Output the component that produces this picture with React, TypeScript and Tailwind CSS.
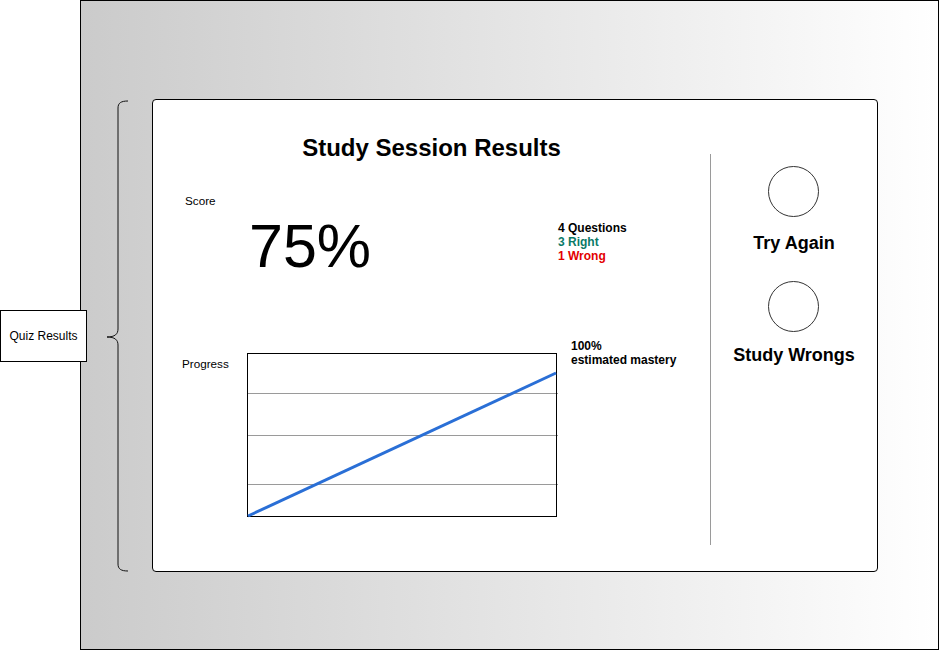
import React from "react";

const Brace = (): JSX.Element => (
  <svg width="24" height="474" viewBox="0 0 24 474" className="mt-[1px] shrink-0">
    <path
      d="M22,1 C15,1 12,3 12,8 V229 C12,234 9,237 1,237 C9,237 12,240 12,245 V464 C12,469 15,471 22,471"
      fill="none"
      stroke="#111"
      strokeWidth="1"
    />
  </svg>
);

const ProgressChart = (): JSX.Element => (
  <svg width="311" height="165" viewBox="0 0 311 165" className="mt-[14px] shrink-0">
    <line x1="0" y1="40.5" x2="311" y2="40.5" stroke="#9a9a9a" />
    <line x1="0" y1="82.5" x2="311" y2="82.5" stroke="#9a9a9a" />
    <line x1="0" y1="131.5" x2="311" y2="131.5" stroke="#9a9a9a" />
    <rect x="0.5" y="0.5" width="309" height="163" fill="none" stroke="#000" />
    <line x1="1" y1="163" x2="309" y2="20" stroke="#2a6fd6" strokeWidth="3" />
  </svg>
);

const ActionButton = ({ label, gap }: { label: string; gap: string }): JSX.Element => (
  <div className={`flex flex-col items-center ${gap}`}>
    <div className="w-[51px] h-[51px] rounded-full border border-[#333] bg-white" />
    <div className="h-[22px] leading-[22px] text-[18px] font-bold text-black whitespace-nowrap">
      {label}
    </div>
  </div>
);

const App = (): JSX.Element => {
  return (
    <div
      className="relative w-[939px] h-[650px] flex bg-white text-black"
      style={{ fontFamily: '"Liberation Sans", Arial, sans-serif' }}
    >
      <div className="absolute left-0 top-[310px] w-[87px] h-[52px] border border-black bg-white flex items-center justify-center text-[12px] z-10">
        Quiz Results
      </div>

      <div className="ml-[80px] w-[859px] h-[650px] border border-black bg-linear-to-r from-[#cbcbcb] to-white flex items-start pl-[25px] pt-[98px]">
        <Brace />

        <div className="ml-[22px] w-[726px] h-[473px] border border-black rounded-[4px] bg-white flex">
          {/* left: results */}
          <div className="w-[557px] flex flex-col">
            <h1 className="pt-[34px] text-center text-[24px] leading-[28px] font-bold">
              Study Session Results
            </h1>

            <div className="mt-[32px] ml-[32px] text-[11.7px] leading-[14px]">Score</div>

            <div className="mt-[8px] pl-[96px] flex items-start">
              <div className="w-[309px] text-[61px] leading-[60px]">75%</div>
              <div className="pt-[5px] text-[12px] leading-[14px] font-bold">
                <div>4 Questions</div>
                <div className="text-[#0a7a67]">3 Right</div>
                <div className="text-[#e30000]">1 Wrong</div>
              </div>
            </div>

            <div className="mt-[63px] pl-[29px] flex items-start">
              <div className="w-[65px] pt-[18px] text-[11.7px] leading-[14px]">Progress</div>
              <ProgressChart />
              <div className="ml-[13px] text-[12px] leading-[14px] font-bold">
                <div>100%</div>
                <div>estimated mastery</div>
              </div>
            </div>
          </div>

          <div className="mt-[54px] w-px h-[391px] bg-[#9a9a9a]" />

          {/* right: actions */}
          <div className="flex-1 flex flex-col items-center pt-[66px]">
            <ActionButton label="Try Again" gap="gap-[15px]" />
            <div className="mt-[27px]">
              <ActionButton label="Study Wrongs" gap="gap-[12px]" />
            </div>
          </div>
        </div>
      </div>
    </div>
  );
};

export default App;
